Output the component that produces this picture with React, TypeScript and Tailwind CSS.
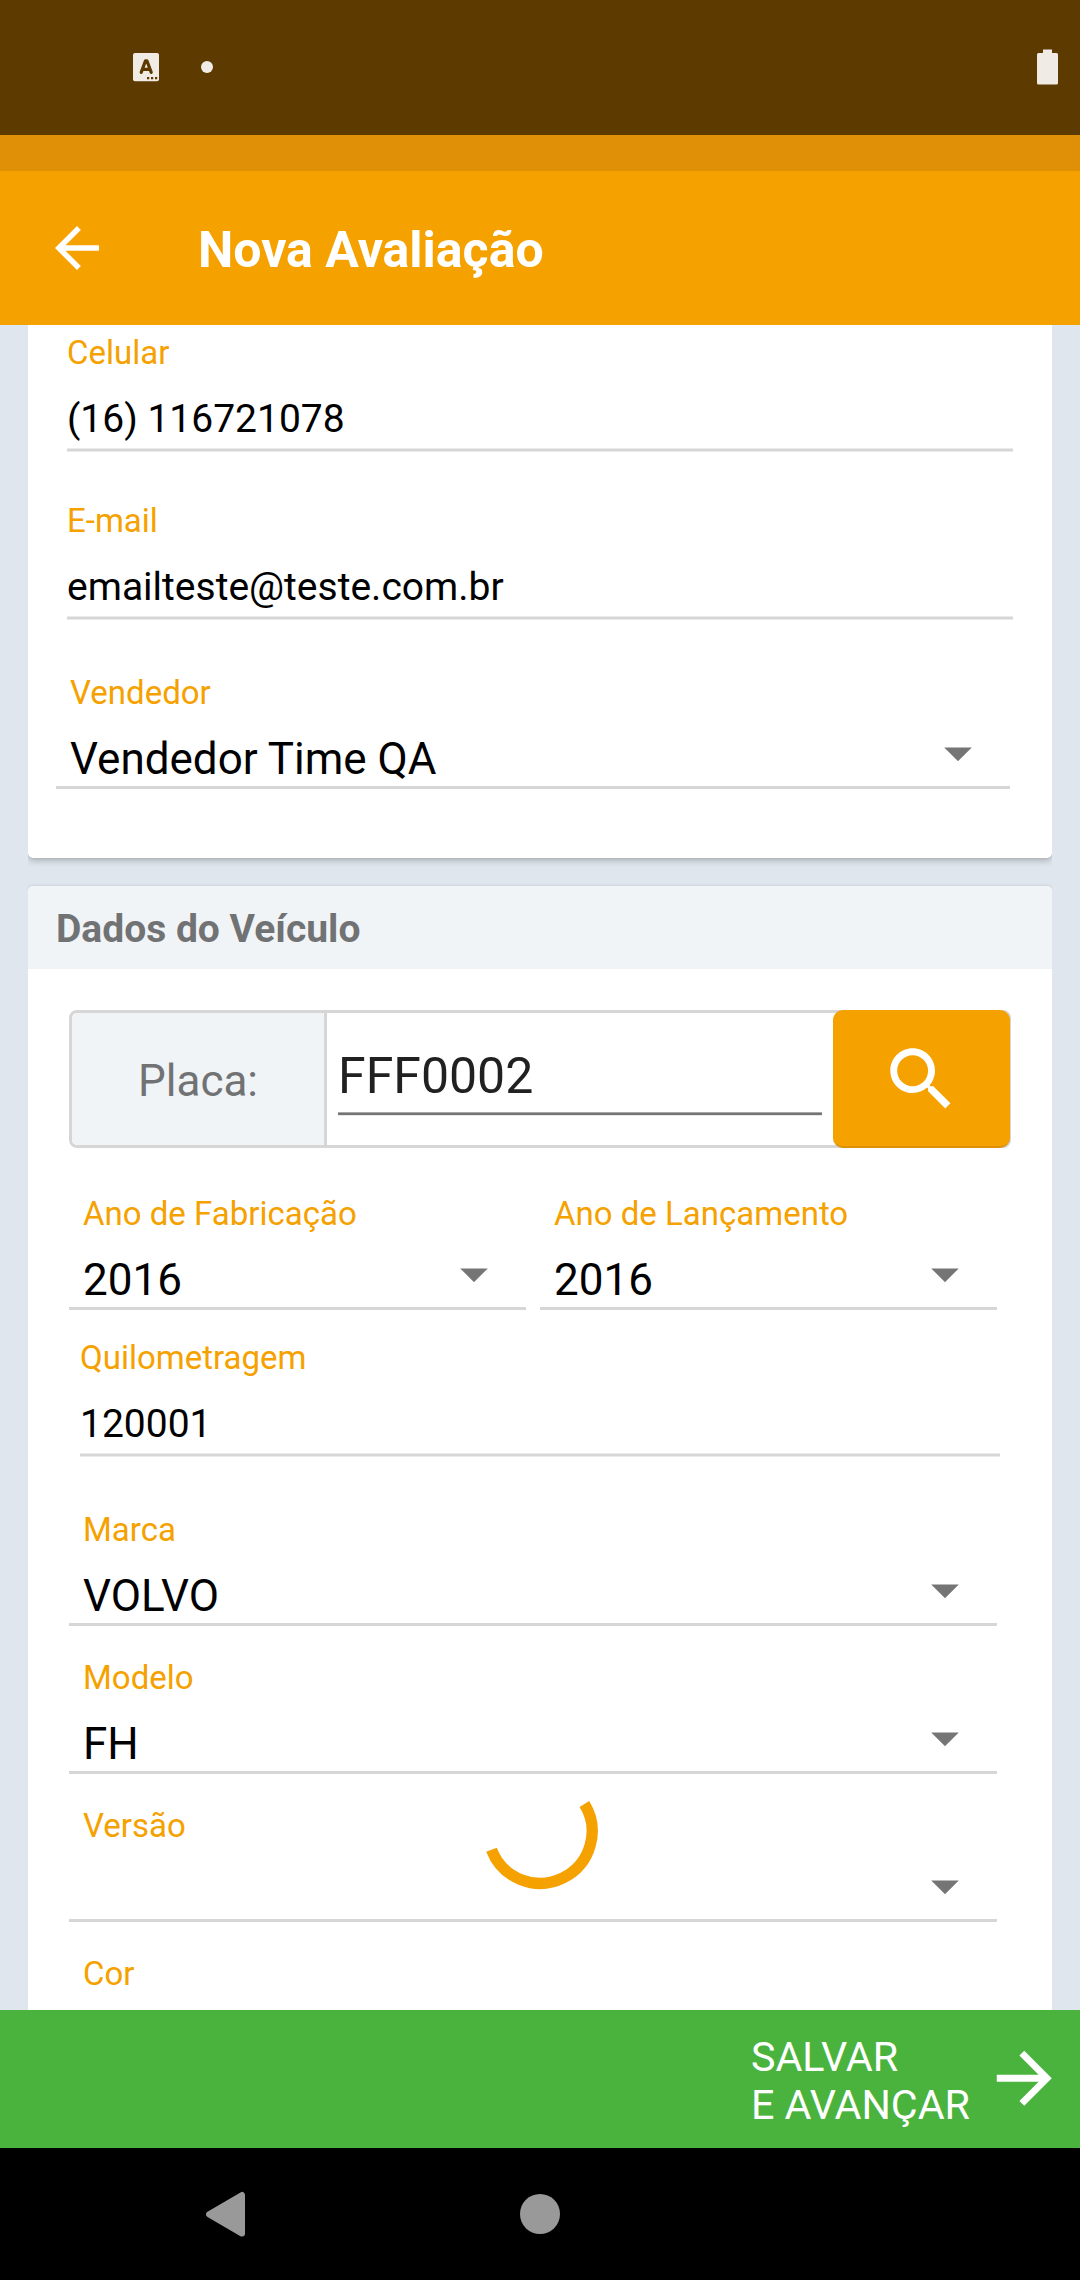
import React from "react";

function Caret() {
  return (
    <svg width="28" height="14" viewBox="0 0 28 14" className="shrink-0">
      <path d="M0.2 0.4h27.6L14 14.2z" fill="#757575" />
    </svg>
  );
}

function Label({ children }: { children: React.ReactNode }) {
  return (
    <div className="h-[39px] text-[33px] leading-[39px] whitespace-nowrap text-[#f5a100]">{children}</div>
  );
}

function TextField({ label, value }: { label: string; value: string }) {
  return (
    <div className="flex flex-col">
      <Label>{label}</Label>
      <div className="mt-6 h-[45px] text-[39px] leading-[47px] text-black">{value}</div>
      <div className="mt-[7px] h-1 border-y border-[#ebebeb] bg-[#d6d6d6]" />
    </div>
  );
}

function SelectField({ label, value }: { label: string; value: string }) {
  return (
    <div className="flex h-[116px] flex-1 flex-col border-b-[3px] border-[#d6d6d6] pl-3.5">
      <Label>{label}</Label>
      <div className="mt-[21px] flex h-[52px] items-start justify-between pr-[38px] text-[44px] leading-[52px] text-black">
        <span className="whitespace-nowrap">{value}</span>
        <div className="pt-[14px]">
          <Caret />
        </div>
      </div>
    </div>
  );
}

function StatusBar() {
  return (
    <div className="flex h-[135px] items-start bg-[#5c3a00]">
      <svg width="28" height="30" viewBox="0 0 28 30" className="mt-[52px] ml-[132px]">
        <rect x="1" y="1" width="26" height="28.300" rx="2" fill="#f0ece5" />
        <path d="M9.200 20.400L13.500 8.800h1.400l4.300 11.600M10.800 17.400h6.800" fill="none" stroke="#5c3a00" strokeWidth="3.200" strokeLinejoin="round" strokeLinecap="round" />
        <path d="M15 25h2.2v2.2H15zM19 25h2.2v2.2H19zM23 25h2.2v2.2H23z" fill="#5c3a00" />
      </svg>
      <div className="mt-[61px] ml-[41px] size-3 rounded-full bg-[#f0ece5]" />
      <svg width="21" height="36" viewBox="0 0 21 36" className="mt-[49px] mr-[22px] ml-auto">
        <path d="M6 0.5h9V4h4.5Q21 4 21 5.5V34q0 1.5-1.5 1.5h-18Q0 35.500 0 34V5.500Q0 4 1.500 4H6z" fill="#f0ece5" />
      </svg>
    </div>
  );
}

function AppBar() {
  return (
    <header className="border-t-[36px] border-[#df9007] bg-[#f5a100]">
      <div className="flex h-[154px] items-start">
        <svg width="66" height="66" viewBox="0 0 24 24" fill="#fff" className="mt-11 ml-11">
          <path d="M20 11H7.83l5.59-5.59L12 4l-8 8 8 8 1.410-1.410L7.830 13H20v-2z" />
        </svg>
        <h1 className="mt-[50px] ml-[88px] text-[50px] leading-[58px] font-bold text-white">Nova Avaliação</h1>
      </div>
    </header>
  );
}

function PlateSearch() {
  return (
    <div className="relative flex h-[138px] rounded-[8px] border-[3px] border-[#d6d6d6]">
      <div className="w-[255px] rounded-l-[5px] border-r-[3px] border-[#d6d6d6] bg-[#f1f4f7] pt-[42px] text-center text-[44px] leading-[52px] text-[#717274]">
        Placa:
      </div>
      <div className="ml-[11px] w-[484px] pt-[34px]">
        <div className="text-[50px] leading-[58px] text-[#212121]">FFF0002</div>
        <div className="mt-[7px] h-1 border-t border-b border-t-[#a8a8a8] border-b-[#e8e8e8] bg-[#757575]" />
      </div>
      <button className="absolute -top-[3px] -right-[2px] flex h-[138px] w-[177px] items-start rounded-[10px] border-b-2 border-[#df9007] bg-[#f5a100] pt-[27.500px] pl-[47px]">
        <svg width="82.500" height="82.500" viewBox="0 0 24 24" fill="#fff">
          <path d="M15.500 14h-.790l-.280-.270C15.410 12.590 16 11.110 16 9.500 16 5.910 13.090 3 9.500 3S3 5.910 3 9.500 5.910 16 9.500 16c1.610 0 3.090-.590 4.230-1.570l.270.280v.790l5 4.990L20.490 19l-4.990-5zm-6 0C7.010 14 5 11.990 5 9.500S7.010 5 9.500 5 14 7.010 14 9.500 11.990 14 9.500 14z" />
        </svg>
      </button>
    </div>
  );
}

function Spinner() {
  return (
    <svg width="120" height="120" viewBox="-60 -60 120 120" className="absolute top-[1771px] left-[480px]">
      <path d="M44.400 -27A52 52 0 1 1 -48.500 18.700" fill="none" stroke="#f5a100" strokeWidth="11.300" />
    </svg>
  );
}

const cardShadow = "shadow-[0_3px_6px_rgba(0,0,0,0.22),0_0_3px_rgba(0,0,0,0.08)]";

export default function App() {
  return (
    <div className="relative flex h-[2280px] w-[1080px] flex-col overflow-hidden bg-[#dfe6ed] font-['Roboto',sans-serif]">
      <StatusBar />
      <AppBar />
      <main className="h-[1685px] shrink-0 overflow-hidden px-7">
        <div className="overflow-x-clip">
          <section className={"rounded-b-[5px] bg-white pt-2 pb-[69px] " + cardShadow}>
            <div className="flex flex-col gap-[49px] pr-[39px] pl-[39px]">
              <TextField label="Celular" value="(16) 116721078" />
              <TextField label="E-mail" value="emailteste@teste.com.br" />
            </div>
            <div className="mt-[53px] flex pr-[42px] pl-7">
              <SelectField label="Vendedor" value="Vendedor Time QA" />
            </div>
          </section>
          <section className={"mt-7 rounded-[5px] bg-white " + cardShadow}>
            <h2 className="h-[83px] rounded-t-[5px] bg-[#f1f4f7] pt-5 pl-7 text-[39px] leading-[47px] font-bold text-[#717274]">
              Dados do Veículo
            </h2>
            <div className="pt-[41px] pr-[41px] pl-[41px]">
              <PlateSearch />
            </div>
            <div className="mt-[46px] flex gap-3.5 pr-[55px] pl-[41px]">
              <SelectField label="Ano de Fabricação" value="2016" />
              <SelectField label="Ano de Lançamento" value="2016" />
            </div>
            <div className="mt-7 pr-[52px] pl-[52px]">
              <TextField label="Quilometragem" value="120001" />
            </div>
            <div className="mt-[53px] flex flex-col gap-8 pr-[55px] pl-[41px]">
              <div className="flex"><SelectField label="Marca" value="VOLVO" /></div>
              <div className="flex"><SelectField label="Modelo" value="FH" /></div>
              <div className="flex"><SelectField label="Versão" value="" /></div>
              <div className="flex"><SelectField label="Cor" value="" /></div>
            </div>
          </section>
        </div>
      </main>
      <Spinner />
      <button className="flex h-[138px] shrink-0 items-start justify-end bg-[#49b33e] pr-[15px] text-left text-white">
        <span className="mt-[23px] text-[41.25px] leading-[48px]">
          SALVAR
          <br />E AVANÇAR
        </span>
        <svg width="82.500" height="82.500" viewBox="0 0 24 24" fill="#fff" className="mt-[27px] ml-[12.500px]">
          <path d="M12 4l-1.410 1.410L16.170 11H4v2h12.170l-5.580 5.590L12 20l8-8z" />
        </svg>
      </button>
      <nav className="flex h-[132px] shrink-0 items-start bg-black">
        <svg width="40" height="46" viewBox="0 0 40 46" className="mt-[43px] ml-[206px]">
          <path d="M3 23.300L36 4v38.600z" fill="#999" stroke="#999" strokeWidth="6" strokeLinejoin="round" />
        </svg>
        <div className="mt-[46px] ml-[274px] size-10 rounded-full bg-[#999]" />
      </nav>
    </div>
  );
}
